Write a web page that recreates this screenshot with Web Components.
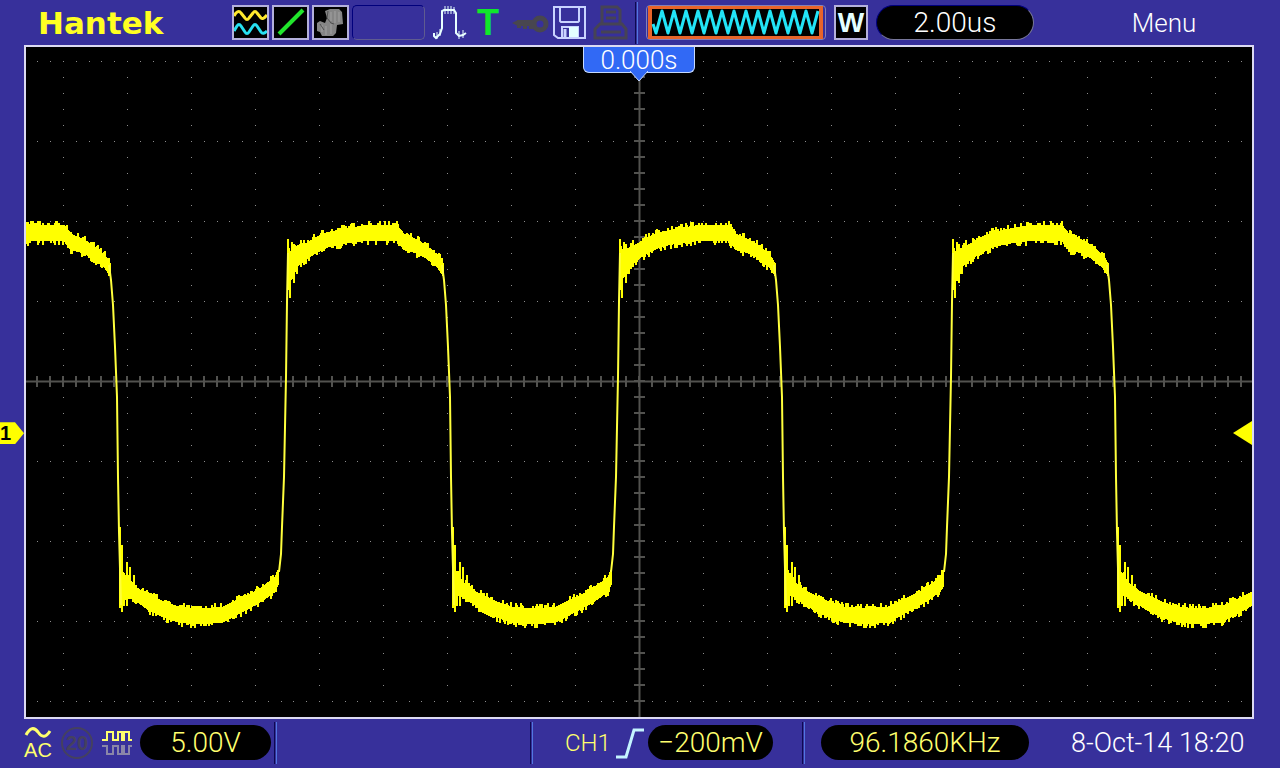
<!DOCTYPE html>
<html lang="en">
<head>
<meta charset="utf-8">
<title>Hantek oscilloscope</title>
<style>
    html, body
    {
        margin: 0;
        background: #37309b;
    }

    body
    {
        min-height: 100vh;
        display: flex;
        flex-direction: column;
        font-family: Roboto, "Liberation Sans", sans-serif;
        font-weight: 300;
        color: #fff;
    }

    scope-screen
    {
        flex: 1;
    }
</style>
</head>
<body>
<scope-topbar></scope-topbar>
<scope-screen offset="0.000s" channel="1"></scope-screen>
<scope-statusbar></scope-statusbar>

<script>
function attach(el, html) {
    const template = document.createElement('template');
    template.innerHTML = html;
    el.attachShadow({ mode: 'open' }).appendChild(template.content.cloneNode(true));
}

// zigzag of the stored record, alternately up and down from its first trough
function zigzag(x, y, half, height, count) {
    let d = `M${x - 3} ${y - 9} L${x} ${y}`;
    for (let i = 0; i < count; i++) {
        d += ` l${half} ${i % 2 ? height : -height}`;
    }
    return d;
}

class ValuePill extends HTMLElement {
    constructor() {
        super();
        attach(this, `
            <style>
                :host
                {
                    display: flex;
                    box-sizing: border-box;
                    height: 35px;
                    align-items: center;
                    justify-content: center;
                    border-radius: 18px;
                    background: #000;
                    font-size: 28px;
                    line-height: 32px;
                    white-space: nowrap;
                }

                :host([bevel])
                {
                    border: 1px solid #00007c;
                    border-right-color: #77779a;
                    border-bottom-color: #77779a;
                }
            </style>
            <output><slot></slot></output>
        `);
    }
}

class BarDivider extends HTMLElement {
    constructor() {
        super();
        attach(this, `
            <style>
                :host
                {
                    display: block;
                    flex: none;
                    box-sizing: border-box;
                    width: 3px;
                    height: 42px;
                    border-left: 1px solid #0c0a50;
                    border-right: 1px solid #5078e0;
                }
            </style>
        `);
    }
}

class IconTile extends HTMLElement {
    constructor() {
        super();
        attach(this, `
            <style>
                :host
                {
                    display: flex;
                    flex: none;
                    box-sizing: border-box;
                    width: 37px;
                    height: 35px;
                    align-items: center;
                    justify-content: center;
                    overflow: hidden;
                    border: 2px solid #b4b0dc;
                    background: #000;
                }
            </style>
            <slot></slot>
        `);
    }
}

class ScopeTopbar extends HTMLElement {
    constructor() {
        super();
        attach(this, `
            <style>
                :host
                {
                    display: flex;
                    height: 45px;
                    padding-left: 38px;
                    align-items: center;
                }

                svg
                {
                    display: block;
                    flex: none;
                }

                .logo
                {
                    width: 194px;
                    font: bold 31px/32px "DejaVu Sans", sans-serif;
                    color: #ff2;
                }

                .tiles, .status
                {
                    display: flex;
                    align-items: center;
                    gap: 3px;
                }

                .status
                {
                    gap: 4px;
                    padding: 0 4px 0 8px;
                }

                .slot
                {
                    box-sizing: border-box;
                    width: 73px;
                    height: 35px;
                    border: 1px solid #00007c;
                    border-right-color: #5f5c90;
                    border-bottom-color: #5f5c90;
                    border-radius: 5px;
                }

                .trig
                {
                    width: 34px;
                    font: bold 36px/32px "Liberation Sans", sans-serif;
                    text-align: center;
                    color: #0fe82c;
                }

                .memory
                {
                    box-sizing: border-box;
                    width: 180px;
                    height: 35px;
                    margin: 0 8px;
                    border: 1px solid #8480b8;
                    border-radius: 4px;
                }

                .memory svg
                {
                    width: 100%;
                    height: 100%;
                }

                .window
                {
                    width: 34px;
                    margin-right: 8px;
                    font: bold 28px/32px "Liberation Sans", sans-serif;
                    color: #e4ffff;
                }

                value-pill
                {
                    width: 158px;
                }

                .menu
                {
                    flex: 1;
                    display: flex;
                    justify-content: center;
                }

                button
                {
                    padding: 0 0 0 14px;
                    border: 0;
                    background: none;
                    font: inherit;
                    font-size: 26px;
                    line-height: 32px;
                    color: #fff;
                }
            </style>
            <div class="logo">Hantek</div>
            <div class="tiles">
                <icon-tile>
                    <svg width="33" height="31" viewBox="0 0 33 31" fill="none" stroke-width="3">
                        <path d="M0 9 L2 6 Q5 3 7 6 L11 11 Q13 14 15 11 L19 6 Q21 3 23 6 L27 11 Q29 13 33 8" stroke="#ffe92e"/>
                        <path d="M0 24 L3 19 Q5 16 7 19 L11 25 Q13 28 15 25 L19 19 Q21 16 23 19 L27 25 Q29 28 33 24" stroke="#27e0f0"/>
                    </svg>
                </icon-tile>
                <icon-tile>
                    <svg width="33" height="31" viewBox="0 0 33 31">
                        <path d="M5 27 L29 3" stroke="#22e52c" stroke-width="4"/>
                    </svg>
                </icon-tile>
                <icon-tile>
                    <svg width="33" height="31" viewBox="0 0 33 31">
                        <path d="M11 4 L16 2 L25 2 L28 5 L29 17 L23 18 L22 26 L19 29 L8 29 L6 25 L3 24 L3 16 L6 14 L11 16 L13 11 Z" fill="#858585"/>
                        <path d="M17 5 V14 M21 4 V16 M25 5 V15 M8 18 V25 M12 19 V28 M17 17 V27" stroke="#a2a2a2" fill="none"/>
                        <path d="M14 4 L13 11 L17 16 L20 17 M6 17 L10 23" stroke="#505050" fill="none"/>
                    </svg>
                </icon-tile>
                <div class="slot"></div>
            </div>
            <div class="status">
                <svg width="34" height="36" viewBox="0 0 34 36" fill="none" stroke="#e8ffff" stroke-width="2">
                    <path d="M1 28 V31 L3 33 L7 29 L9 23 V6 L11 5 H21 L23 8 V28 L26 31 L30 30 L33 28"/>
                    <path d="M4 34 V27 M7 31 V24 M12 9 V1 M15 9 V1 M18 9 V1 M21 9 V2 M26 34 V26 M30 33 V25" stroke-width="1"/>
                </svg>
                <div class="trig">T</div>
                <svg width="40" height="36" viewBox="0 0 40 36" fill="none" stroke="#48464f">
                    <circle cx="31" cy="19" r="6" stroke-width="5"/>
                    <path d="M8 18 H26" stroke-width="6"/>
                    <path d="M3 18 L9 15 V21 Z" fill="#48464f" stroke="none"/>
                    <path d="M10 19 V23 M16 19 V24 M22 19 V24" stroke-width="4"/>
                </svg>
                <svg width="34" height="36" viewBox="0 0 34 36" fill="none" stroke="#c9d3ff" stroke-width="2">
                    <path d="M1 2 H32 V33 H5 L1 30 Z"/>
                    <path d="M7 2 V16 L8 17 H25 L26 16 V2"/>
                    <path d="M9 33 V22 H25 V33"/>
                    <rect x="16" y="22" width="9" height="10" fill="#e3ffff" stroke="none"/>
                    <path d="M12 24 V32" stroke-width="3"/>
                </svg>
                <svg width="40" height="36" viewBox="0 0 40 36" fill="none" stroke="#464355" stroke-width="3">
                    <path d="M11 18 V2 H26 L29 5 V18"/>
                    <path d="M15 7 H25 M15 13 H25"/>
                    <path d="M9 19 H31 L35 24 V33 H4 V24 Z M10 27 H30"/>
                </svg>
            </div>
            <bar-divider></bar-divider>
            <div class="memory">
                <svg viewBox="0 0 178 33" preserveAspectRatio="none">
                    <rect x="3" y="1" width="171" height="31" fill="#000" stroke="#e8642a" stroke-width="4"/>
                    <path d="${zigzag(9, 27, 6, 22, 27)}" fill="none" stroke="#22e4f6" stroke-width="3" stroke-linejoin="round"/>
                </svg>
            </div>
            <icon-tile class="window">W</icon-tile>
            <value-pill bevel>2.00us</value-pill>
            <div class="menu"><button type="button">Menu</button></div>
        `);
    }
}

class ScopeScreen extends HTMLElement {
    constructor() {
        super();
        attach(this, `
            <style>
                :host
                {
                    display: grid;
                    position: relative;
                    margin: 0 26px 0 24px;
                    border: 2px solid #dcdaf2;
                    background: #000;
                }

                .plot
                {
                    display: block;
                    width: 100%;
                    height: 100%;
                    min-height: 0;
                }

                .offset
                {
                    position: absolute;
                    top: 0;
                    left: 50%;
                    box-sizing: border-box;
                    width: 112px;
                    height: 26px;
                    margin-left: -56px;
                    border: 1px solid #c6daff;
                    border-top: 0;
                    border-radius: 0 0 6px 6px;
                    background: #3169f5;
                    font-size: 26px;
                    line-height: 26px;
                    text-align: center;
                }

                .offset svg
                {
                    position: absolute;
                    top: 24px;
                    left: 46px;
                }

                .channel
                {
                    position: absolute;
                    top: 56%;
                    left: -26px;
                    width: 24px;
                    height: 22px;
                    background: #ff0;
                    clip-path: polygon(0 0, 15px 0, 100% 50%, 15px 100%, 0 100%);
                    font: bold 20px/22px "Liberation Sans", sans-serif;
                    color: #000;
                }
            </style>
            <svg class="plot" viewBox="0 0 1226 670" preserveAspectRatio="none">
                <g class="grid"></g>
                <g class="trace"></g>
                <path d="M1207 386 L1226 374 V398 Z" fill="#ff0"/>
            </svg>
            <div class="offset">${this.getAttribute('offset')}
                <svg width="18" height="12" viewBox="0 0 18 12">
                    <path d="M0 0 L9 10 L18 0" fill="#3169f5" stroke="#c6daff"/>
                </svg>
            </div>
            <div class="channel">${this.getAttribute('channel')}</div>
        `);
        this.drawGrid();
        this.drawTrace();
    }

    drawGrid() {
        const cx = 613;
        const cy = 334;
        let dots = '';
        let ticks = '';

        // dotted division lines: 5 dots per division both ways
        for (let row = -4; row <= 4; row++) {
            if (row === 0) continue;
            for (let i = -47; i <= 47; i++) {
                dots += `M${Math.round(cx + i * 12.8)} ${cy + row * 80}h1`;
            }
        }
        for (let col = -9; col <= 9; col++) {
            if (col === 0) continue;
            for (let i = -20; i <= 20; i++) {
                dots += `M${cx + col * 64} ${cy + i * 16}h1`;
            }
        }

        for (let i = -47; i <= 47; i++) {
            ticks += `M${Math.round(cx + i * 12.8)} ${cy - 5}v11`;
        }
        for (let i = -20; i <= 20; i++) {
            ticks += `M${cx - 5} ${cy + i * 16}h11`;
        }
        this.shadowRoot.querySelector('.grid').innerHTML = `
            <path d="${dots}" stroke="#8c8c8c" stroke-width="1" transform="translate(0 .5)"/>
            <path d="${ticks}M0 ${cy}.5H1226M${cx}.5 0V670" stroke="#52524f" stroke-width="2" fill="none"/>
        `;
    }

    drawTrace() {
        const period = 332.7;
        const firstRise = 259.5;

        // [phase, upper edge, lower edge] of the noisy band
        const high = [
            [2, 203, 234], [6, 204, 230], [12, 200, 219], [22, 195, 211], [32, 189, 205],
            [42, 185, 200], [62, 181, 196], [80, 178, 194], [111, 178, 194], [118, 187, 203],
            [130, 192, 206], [140, 198, 211], [152, 208, 221], [158, 218, 230]
        ];
        const low = [
            [169, 523, 546], [177, 535, 551], [187, 543, 557], [197, 548, 564], [212, 555, 571],
            [227, 560, 576], [247, 561, 577], [269, 560, 576], [284, 553, 568], [297, 547, 561],
            [309, 540, 554], [322, 530, 545], [326, 520, 535]
        ];
        const rise = [[-7, 525], [-5, 507], [-4, 480], [-2, 430], [-1, 380], [0, 330], [1, 255], [2, 206]];
        const fall = [[156, 218], [158, 233], [160, 258], [162, 300], [164, 350], [165, 430], [166, 485], [168, 558]];

        // ringing after each edge: [phase, from, to]
        const spikes = [
            [2, 192, 243], [4, 215, 251], [6, 195, 216], [8, 197, 236], [11, 203, 227], [15, 193, 220],
            [167, 480, 561], [169, 498, 565], [171, 527, 559], [174, 515, 559], [177, 520, 552], [181, 528, 553]
        ];

        let seed = 7;
        const noise = () => {
            seed = (seed * 16807) % 2147483647;
            return seed / 2147483647;
        };

        let band = '';
        let lines = '';
        for (let n = -1; n < 4; n++) {
            const x0 = firstRise + n * period;

            for (const part of [high, low]) {
                for (let k = 0; k < part.length - 1; k++) {
                    const [p, a, b] = part[k];
                    const [q, c, d] = part[k + 1];
                    for (let x = p; x < q; x++) {
                        const t = (x - p) / (q - p);
                        const up = Math.floor(noise() ** 3 * 3) * 2;
                        const down = Math.floor(noise() ** 3 * 3) * 2;
                        const y1 = Math.round(a + (c - a) * t) - up;
                        const y2 = Math.round(b + (d - b) * t) + down;
                        band += `M${Math.round(x0 + x)} ${y1}V${y2}`;
                    }
                }
            }
            for (const [p, from, to] of spikes) {
                band += `M${Math.round(x0 + p)} ${from}V${to}`;
            }
            for (const edge of [rise, fall]) {
                lines += 'M' + edge.map(([p, y]) => `${Math.round(x0 + p)} ${y}`).join('L');
            }
        }
        this.shadowRoot.querySelector('.trace').innerHTML = `
            <path d="${band}" stroke="#ff0" stroke-width="2" fill="none"/>
            <path d="${lines}" stroke="#ffff3c" stroke-width="2" fill="none"/>
        `;
    }
}

class ScopeStatusbar extends HTMLElement {
    constructor() {
        super();
        attach(this, `
            <style>
                :host
                {
                    display: flex;
                    box-sizing: border-box;
                    height: 49px;
                    padding: 0 34px 2px 24px;
                    align-items: center;
                    color: #ffff6e;
                }

                svg
                {
                    display: block;
                    flex: none;
                }

                .channel, .trigger
                {
                    display: flex;
                    align-items: center;
                }

                .channel
                {
                    gap: 8px;
                    padding-right: 3px;
                }

                .channel value-pill
                {
                    width: 131px;
                }

                .coupling
                {
                    width: 28px;
                    font: 20px/18px "Liberation Sans", sans-serif;
                    text-align: center;
                }

                .spare
                {
                    flex: 1;
                }

                .trigger
                {
                    padding: 0 29px 0 32px;
                    font-size: 24px;
                    line-height: 32px;
                }

                .source
                {
                    width: 50px;
                }

                .trigger value-pill
                {
                    width: 125px;
                    margin-left: 3px;
                }

                .frequency
                {
                    width: 208px;
                    margin-left: 16px;
                }

                time
                {
                    margin-left: 42px;
                    width: 175px;
                    font-size: 27px;
                    line-height: 32px;
                    white-space: nowrap;
                    color: #fff;
                }
            </style>
            <div class="channel">
                <div class="coupling">
                    <svg width="28" height="14" viewBox="0 0 28 14">
                        <path d="M2 8 Q8 -3 14 5 Q20 14 26 4" fill="none" stroke="#ffff6e" stroke-width="3"/>
                    </svg>
                    AC
                </div>
                <svg width="34" height="34" viewBox="0 0 34 34">
                    <circle cx="17" cy="17" r="15" fill="none" stroke="#45415f" stroke-width="2"/>
                    <text x="17" y="24" text-anchor="middle" font-family="Liberation Sans" font-size="20" font-weight="bold" fill="#45415f">20</text>
                </svg>
                <svg width="30" height="30" viewBox="0 0 30 30" fill="none" stroke-width="2">
                    <path d="M0 12 H5 V4 H11 V12 H16 V4 H20 V12 H22 V4 H27 V12 H30" stroke="#ffff6e"/>
                    <path d="M0 18 H5 V26 H11 V18 H16 V26 H20 V18 H22 V26 H27 V18 H30" stroke="#8a86a8"/>
                </svg>
                <value-pill>5.00V</value-pill>
            </div>
            <bar-divider></bar-divider>
            <div class="spare"></div>
            <bar-divider></bar-divider>
            <div class="trigger">
                <span class="source">CH1</span>
                <svg width="30" height="32" viewBox="0 0 30 32">
                    <path d="M1 30 H11 L19 3 H29" fill="none" stroke="#c4f4ff" stroke-width="3"/>
                </svg>
                <value-pill>−200mV</value-pill>
            </div>
            <bar-divider></bar-divider>
            <value-pill class="frequency">96.1860KHz</value-pill>
            <time datetime="2014-10-08T18:20">8-Oct-14 18:20</time>
        `);
    }
}

window.customElements.define('value-pill', ValuePill);
window.customElements.define('bar-divider', BarDivider);
window.customElements.define('icon-tile', IconTile);
window.customElements.define('scope-topbar', ScopeTopbar);
window.customElements.define('scope-screen', ScopeScreen);
window.customElements.define('scope-statusbar', ScopeStatusbar);
</script>
</body>
</html>
